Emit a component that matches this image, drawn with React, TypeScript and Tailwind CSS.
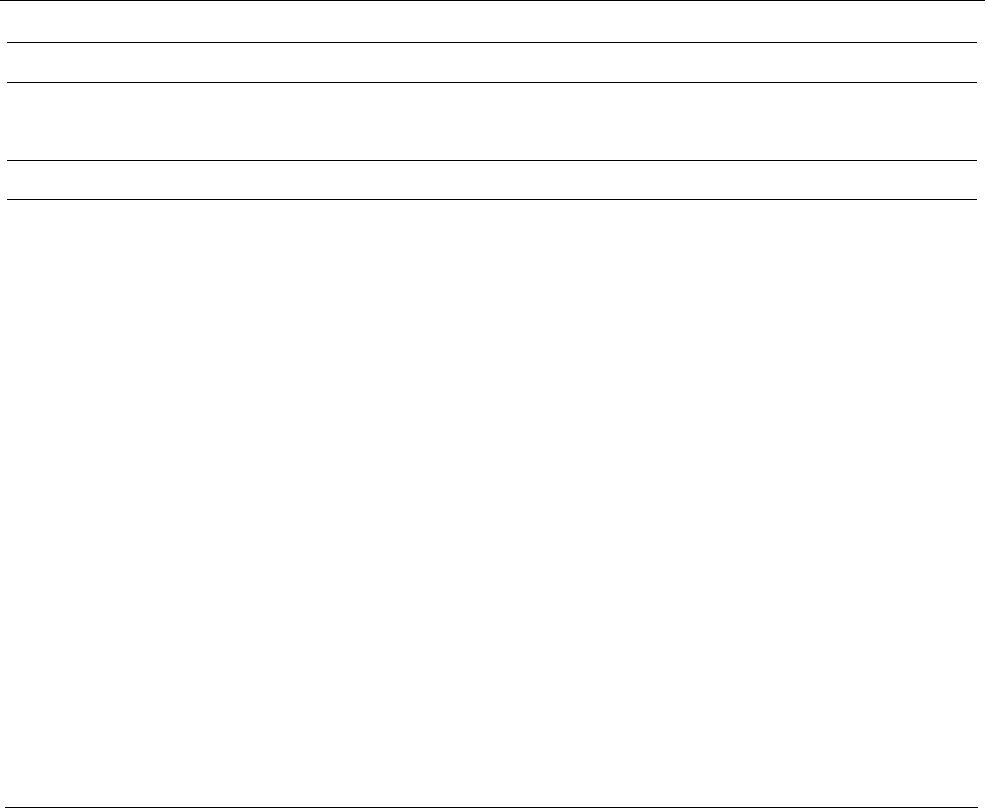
export default function App() {
  return (
    <div className="w-[987px] h-[809px] bg-white font-['Liberation_Sans',sans-serif]">
      <div className="w-[985px] border-t border-black">
        <div className="ml-[7px] w-[970px]">
          <div className="h-[42px] border-b border-black"></div>
          <div className="h-[40px] border-b border-black"></div>
          <div className="h-[78px] border-b border-black"></div>
          <div className="h-[39px] border-b border-black"></div>
        </div>
        <div className="ml-[5px] w-[973px] h-[608px] border-b border-black"></div>
      </div>
    </div>
  );
}
